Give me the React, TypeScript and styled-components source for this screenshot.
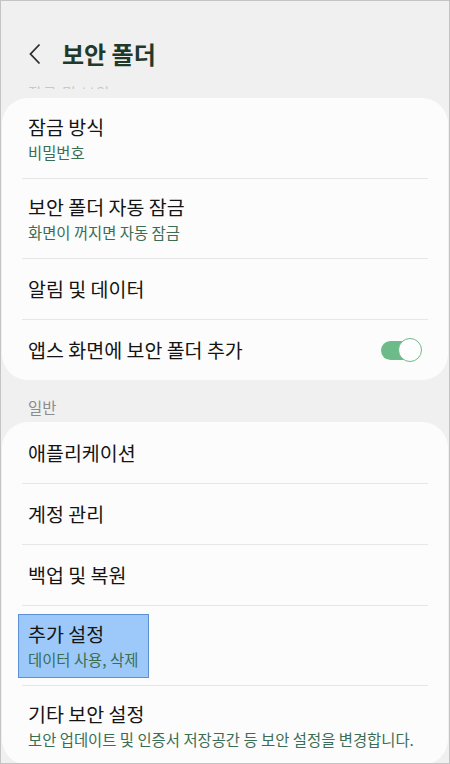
import styled, { createGlobalStyle } from 'styled-components';

const GlobalStyle = createGlobalStyle`
    html, body {
        margin: 0;
        padding: 0;
        background: #ffffff;
    }
    body {
        font-family: 'Noto Sans CJK KR', 'Noto Sans', sans-serif;
    }
`;

interface Item {
    title: string;
    sub?: string;
    toggle?: boolean;
    highlight?: boolean;
}

const lockItems: Item[] = [
    { title: '잠금 방식', sub: '비밀번호' },
    { title: '보안 폴더 자동 잠금', sub: '화면이 꺼지면 자동 잠금' },
    { title: '알림 및 데이터' },
    { title: '앱스 화면에 보안 폴더 추가', toggle: true },
];

const generalItems: Item[] = [
    { title: '애플리케이션' },
    { title: '계정 관리' },
    { title: '백업 및 복원' },
    { title: '추가 설정', sub: '데이터 사용, 삭제', highlight: true },
    { title: '기타 보안 설정', sub: '보안 업데이트 및 인증서 저장공간 등 보안 설정을 변경합니다.' },
];

function SettingsList({ items }: { items: Item[] }) {
    return (
        <S_Card>
            {items.map((item, idx) => (
                <div key={item.title}>
                    {idx > 0 && <S_Divider />}
                    <S_Row $twoLine={!!item.sub}>
                        <S_TextBlock $highlight={!!item.highlight}>
                            <S_Title>{item.title}</S_Title>
                            {item.sub && <S_Sub>{item.sub}</S_Sub>}
                        </S_TextBlock>
                        {item.toggle && (
                            <S_Switch>
                                <S_Knob />
                            </S_Switch>
                        )}
                    </S_Row>
                </div>
            ))}
        </S_Card>
    );
}

export default function App() {
    return (
        <>
            <GlobalStyle />
            <S_Frame>
                <S_TopBar>
                    <S_Back aria-label="뒤로">
                        <svg width="14" height="22" viewBox="0 0 14 22" fill="none">
                            <path d="M11.5 1.5 L2.5 11 L11.5 20.5" stroke="#2a2f2c" strokeWidth="1.8" />
                        </svg>
                    </S_Back>
                    <S_PageTitle>보안 폴더</S_PageTitle>
                </S_TopBar>
                {/* header of the section scrolled under the app bar, only its top shows */}
                <S_Ghost>
                    <span>잠금 및 보안</span>
                </S_Ghost>
                <SettingsList items={lockItems} />
                <S_SectionLabel>일반</S_SectionLabel>
                <SettingsList items={generalItems} />
            </S_Frame>
        </>
    );
}

const S_Frame = styled.div`
    box-sizing: border-box;
    width: 450px;
    height: 764px;
    overflow: hidden;
    border: 1px solid #c4c4c4;
    background: #f0f0f0;
`;
const S_TopBar = styled.header`
    display: flex;
    align-items: center;
    gap: 20px;
    padding: 39px 0 0 27px;
    height: 28px;
`;
const S_Back = styled.div`
    display: flex;
    align-items: center;
    width: 14px;
    height: 22px;
`;
const S_PageTitle = styled.h1`
    margin: 0;
    font-size: 24px;
    line-height: 28px;
    font-weight: 700;
    color: #1f3a2b;
`;
const S_Ghost = styled.div`
    margin-top: 17px;
    height: 4px;
    overflow: hidden;
    padding-left: 27px;
    margin-bottom: 9px;
    span {
        display: block;
        font-size: 15px;
        line-height: 15px;
        color: #c8c8c8;
        letter-spacing: 1px;
    }
`;
const S_Card = styled.section`
    margin: 0 1px 0 1px;
    padding-top: 1px;
    background: #fcfcfc;
    border-radius: 26px;
`;
const S_Divider = styled.div`
    margin: 0 20px;
    height: 1px;
    background: #e6e6e6;
`;
const S_Row = styled.div<{ $twoLine: boolean }>`
    display: flex;
    align-items: center;
    justify-content: space-between;
    padding: ${(p) => (p.$twoLine ? '17px 27px 16px 26px' : '19px 27px 19px 26px')};
`;
const S_TextBlock = styled.div<{ $highlight: boolean }>`
    display: flex;
    flex-direction: column;
    gap: 4px;
    margin: -9px -11px -9px -10px;
    padding: 8px 10px 8px 9px;
    background: ${(p) => (p.$highlight ? '#9cc9fa' : 'transparent')};
    border: 1px solid ${(p) => (p.$highlight ? '#5b91d3' : 'transparent')};
`;
const S_Title = styled.div`
    font-size: 19.5px;
    line-height: 22px;
    color: #141414;
`;
const S_Sub = styled.div`
    font-size: 15.4px;
    line-height: 20px;
    color: #3a6e54;
    white-space: nowrap;
`;
const S_Switch = styled.div`
    display: flex;
    align-items: center;
    justify-content: flex-end;
    width: 40px;
    height: 19px;
    border-radius: 10px;
    background: #6cbb88;
`;
const S_Knob = styled.span`
    box-sizing: border-box;
    width: 24px;
    height: 24px;
    margin-right: -1px;
    border-radius: 50%;
    background: #ffffff;
    border: 1.5px solid #6cbb88;
`;
const S_SectionLabel = styled.div`
    padding: 18px 27px 6px;
    font-size: 15.4px;
    line-height: 18px;
    color: #8c8c8c;
`;
